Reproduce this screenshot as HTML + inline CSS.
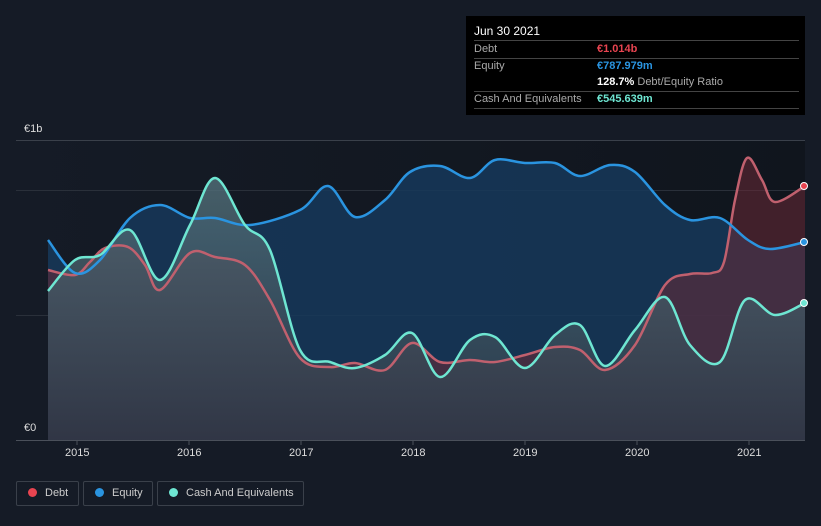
<!DOCTYPE html>
<html><head><meta charset="utf-8"><style>
html,body{margin:0;padding:0;background:#151b26;width:821px;height:526px;overflow:hidden;font-family:"Liberation Sans",sans-serif}
.tt{position:absolute;left:466px;top:16px;width:339px;height:99px;background:#000;color:#fff;font-size:11px}
.tt .r{position:absolute;left:8px;right:6px;height:16px;line-height:16px;white-space:nowrap}
.tt .l{color:#aaa}
.tt .v{position:absolute;left:123px;top:0}
.ln{position:absolute;left:8px;right:6px;height:1px;background:#444}
.leg{position:absolute;top:481px;height:25px;border:1px solid #3a404a;border-radius:2px;color:#ccc;font-size:11px;line-height:23px;box-sizing:border-box;white-space:nowrap}
.leg i{display:inline-block;width:9px;height:9px;border-radius:50%;margin:0 8px 0 11px;vertical-align:-1px}
.ax{position:absolute;color:#ddd;font-size:11px}
</style></head><body>
<svg width="821" height="526" style="position:absolute;left:0;top:0">
<defs>
<linearGradient id="bg" x1="0" x2="1"><stop offset="0" stop-color="#151b26"/><stop offset="1" stop-color="#10151d"/></linearGradient>
<linearGradient id="cg" x1="0" y1="180" x2="0" y2="440" gradientUnits="userSpaceOnUse"><stop offset="0" stop-color="#52707a"/><stop offset="1" stop-color="#2c3846"/></linearGradient>
</defs>
<rect x="16" y="140" width="789" height="300" fill="url(#bg)"/>
<line x1="16" y1="140.5" x2="805" y2="140.5" stroke="#3a404a"/>
<line x1="16" y1="190.5" x2="805" y2="190.5" stroke="#2a303a"/>
<line x1="16" y1="315.5" x2="805" y2="315.5" stroke="#2a303a"/>
<path id="eqf" fill="#16385a" fill-opacity="0.85"/>
<path id="dbf" fill="#6a2a36" fill-opacity="0.55"/>
<path id="caf" fill="url(#cg)" fill-opacity="0.8"/>
<path id="dbl" fill="none" stroke="#c0606e" stroke-width="2.5"/>
<path id="eql" fill="none" stroke="#2a94e0" stroke-width="2.5"/>
<path id="cal" fill="none" stroke="#6ee6d2" stroke-width="2.5"/>
<line x1="16" y1="440.5" x2="805" y2="440.5" stroke="#4a505a"/>
<g stroke="#4a505a"><line x1="77" y1="440" x2="77" y2="445"/><line x1="189" y1="440" x2="189" y2="445"/><line x1="301" y1="440" x2="301" y2="445"/><line x1="413" y1="440" x2="413" y2="445"/><line x1="525" y1="440" x2="525" y2="445"/><line x1="637" y1="440" x2="637" y2="445"/><line x1="749" y1="440" x2="749" y2="445"/></g>
<circle cx="804" cy="186" r="3.5" fill="#e84450" stroke="#fff" stroke-width="1"/>
<circle cx="804" cy="242" r="3.5" fill="#2a94e0" stroke="#fff" stroke-width="1"/>
<circle cx="804" cy="303" r="3.5" fill="#6ee6d2" stroke="#fff" stroke-width="1"/>
</svg>
<div class="ax" style="left:24px;top:123px">€1b</div>
<div class="ax" style="left:24px;top:422px">€0</div>
<div class="ax" style="left:65px;top:447px">2015</div>
<div class="ax" style="left:177px;top:447px">2016</div>
<div class="ax" style="left:289px;top:447px">2017</div>
<div class="ax" style="left:401px;top:447px">2018</div>
<div class="ax" style="left:513px;top:447px">2019</div>
<div class="ax" style="left:625px;top:447px">2020</div>
<div class="ax" style="left:737px;top:447px">2021</div>
<div class="tt">
<div class="r" style="top:7px;font-size:12px">Jun 30 2021</div>
<div class="ln" style="top:24px"></div>
<div class="r" style="top:25px"><span class="l">Debt</span><span class="v" style="color:#e84450;font-weight:bold">€1.014b</span></div>
<div class="ln" style="top:42px"></div>
<div class="r" style="top:42px"><span class="l">Equity</span><span class="v" style="color:#2a94e0;font-weight:bold">€787.979m</span></div>
<div class="r" style="top:58px"><span class="v"><b>128.7%</b> <span class="l">Debt/Equity Ratio</span></span></div>
<div class="ln" style="top:75px"></div>
<div class="r" style="top:75px"><span class="l">Cash And Equivalents</span><span class="v" style="color:#6ee6d2;font-weight:bold">€545.639m</span></div>
<div class="ln" style="top:92px"></div>
</div>
<div class="leg" style="left:16px;width:63px"><i style="background:#e84450"></i>Debt</div>
<div class="leg" style="left:83px;width:70px"><i style="background:#2a94e0"></i>Equity</div>
<div class="leg" style="left:157px;width:147px"><i style="background:#6ee6d2"></i>Cash And Equivalents</div>
<script>
var E=[[48,240],[75,273],[100,260],[130,218],[160,205],[190,218],[215,218],[250,225],[300,210],[328,186],[355,217],[385,200],[410,172],[440,166],[470,178],[495,160],[525,163],[555,163],[580,176],[610,165],[635,172],[665,205],[690,220],[720,218],[748,240],[770,249],[805,242]];
var D=[[48,270],[75,275],[90,262],[105,248],[128,247],[145,265],[160,290],[190,253],[215,257],[245,265],[270,300],[300,358],[330,367],[355,363],[385,370],[412,343],[440,362],[470,360],[495,362],[525,355],[555,347],[580,350],[605,370],[635,345],[665,285],[690,274],[712,273],[724,262],[735,200],[747,158],[762,180],[775,202],[805,186]];
var C=[[48,291],[75,260],[100,255],[130,230],[160,280],[190,225],[215,178],[245,225],[270,250],[300,350],[330,362],[355,368],[385,355],[412,333],[440,377],[470,340],[495,337],[525,368],[555,335],[580,325],[605,366],[635,330],[665,297],[690,345],[720,362],[745,300],[775,315],[805,303]];
function sm(p){var s="M"+p[0][0]+","+p[0][1];for(var i=0;i<p.length-1;i++){var a=p[i-1]||p[i],b=p[i],c=p[i+1],d=p[i+2]||c;
s+=" C"+(b[0]+(c[0]-a[0])/6)+","+(b[1]+(c[1]-a[1])/6)+" "+(c[0]-(d[0]-b[0])/6)+","+(c[1]-(d[1]-b[1])/6)+" "+c[0]+","+c[1];}return s;}
function set(id,d){document.getElementById(id).setAttribute("d",d);}
[[E,"eq"],[D,"db"],[C,"ca"]].forEach(function(x){var s=sm(x[0]);set(x[1]+"l",s);set(x[1]+"f",s+" L805,440 L48,440 Z");});
</script>
</body></html>
